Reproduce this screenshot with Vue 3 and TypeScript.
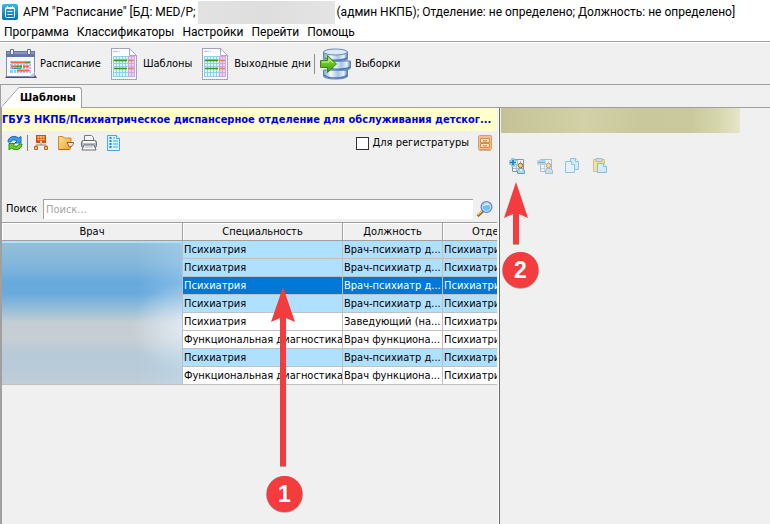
<script setup lang="ts">
import { ref } from 'vue'

interface Row {
  id: number
  speciality: string
  position: string
  department: string
  tone: 'blue' | 'plain'
}

const menu: string[] = ['Программа', 'Классификаторы', 'Настройки', 'Перейти', 'Помощь']
const sheets: string[] = ['Шаблоны', 'Выходные дни']
const child = 'Врач-психиатр д...'
const functional = 'Врач функциона...'
const department = 'Психиатри'

const rows: Row[] = [
  { id: 1, speciality: 'Психиатрия', position: child, department, tone: 'blue' },
  { id: 2, speciality: 'Психиатрия', position: child, department, tone: 'blue' },
  { id: 3, speciality: 'Психиатрия', position: child, department, tone: 'blue' },
  { id: 4, speciality: 'Психиатрия', position: child, department, tone: 'blue' },
  { id: 5, speciality: 'Психиатрия', position: 'Заведующий (на...', department, tone: 'plain' },
  { id: 6, speciality: 'Функциональная диагностика', position: functional, department, tone: 'plain' },
  { id: 7, speciality: 'Психиатрия', position: child, department, tone: 'blue' },
  { id: 8, speciality: 'Функциональная диагностика', position: functional, department, tone: 'plain' },
]

const selected = ref(3)
const query = ref('')
const registry = ref(false)
</script>

<template>
  <div class="window">
    <svg class="defs" aria-hidden="true">
      <defs>
        <linearGradient id="blueGrad" x1="0" y1="0" x2="0" y2="1">
          <stop offset="0" stop-color="#35b5e8" /><stop offset="1" stop-color="#0a6fae" />
        </linearGradient>
        <linearGradient id="discGrad">
          <stop offset="0" stop-color="#7f9fc4" /><stop offset=".3" stop-color="#f4faff" />
          <stop offset=".6" stop-color="#a9c6e4" /><stop offset=".85" stop-color="#e8f3fd" />
          <stop offset="1" stop-color="#5577a8" />
        </linearGradient>
        <linearGradient id="greenGrad" x1="0" y1="0" x2="0" y2="1">
          <stop offset="0" stop-color="#a5e63e" /><stop offset="1" stop-color="#2f9d08" />
        </linearGradient>
        <linearGradient id="goldGrad" x1="0" y1="0" x2="1" y2="1">
          <stop offset="0" stop-color="#ffe39a" /><stop offset="1" stop-color="#eda12c" />
        </linearGradient>
      </defs>
    </svg>

    <header class="title">
      <svg class="app-icon" width="16" height="16" viewBox="0 0 16 16" aria-hidden="true">
        <rect width="16" height="16" rx="2" fill="url(#blueGrad)" />
        <rect x="3.5" y="3.5" width="9" height="10" rx="1" fill="none" stroke="#fff" />
        <path d="M4 4.500h8M5.500 2v2M10.500 2v2" stroke="#fff" />
        <path d="M5.500 7.500h5M5.500 10.500h5" stroke="#fff" />
      </svg>
      <span>АРМ "Расписание" [БД: MED/P;</span>
      <span class="masked-name"></span>
      <span>(админ НКПБ); Отделение: не определено; Должность: не определено]</span>
    </header>

    <nav class="menu">
      <button v-for="item in menu" :key="item" type="button">{{ item }}</button>
    </nav>

    <div class="toolbar">
      <button type="button" class="tool">
        <svg width="32" height="32" viewBox="0 0 32 32" aria-hidden="true">
          <path d="M2 27h28l2 3H0z" fill="#4d5577" />
          <rect x="1.500" y="3.500" width="28" height="25" rx="1" fill="#f6f9fd" stroke="#7f8bb2" />
          <path d="M1 3h29v6H1z" fill="#6874a8" /><path d="M2 4h27v2H2z" fill="#8b96c3" />
          <path d="M24 28.500l6-5-1 5z" fill="#c4cee2" />
          <path d="M5.500 1.500v5h3v-5zM22.500 1.500v5h3v-5z" fill="#eef4f9" stroke="#597596" />
          <path d="M5 13h21v12H5z" fill="#94cdec" />
          <path d="M21 13h4v12h-4z" fill="#e1b3e7" />
          <path d="M5 15.500h21M5 18.500h21M5 21.500h21M8.500 13v12M11.500 13v12M14.500 13v12M17.500 13v12M20.500 13v12M23.500 13v12" stroke="#e5f8ff" />
          <path d="M6 14.500h14M12 22.500h12M6 18.500h5M18 18.500h6" stroke="#ff6239" stroke-width="2" />
          <path d="M20 14.500h5M11 18.500h6" stroke="#43a527" stroke-width="2" />
          <path d="M7 20.500h9" stroke="#299be2" stroke-width="1" />
        </svg>
        <span>Расписание</span>
      </button>
      <button v-for="item in sheets" :key="item" type="button" class="tool sheet">
        <svg width="26" height="32" viewBox="0 0 26 32" aria-hidden="true">
          <path d="M.5.500h18l7 7v24H.5z" fill="#fafcff" stroke="#475193" stroke-dasharray="1 1" />
          <path d="M18.500.500v7h7z" fill="#fff" stroke="#a3abc5" />
          <path d="M2 3.500h5M8 3.500h1" stroke="#b4c5ed" />
          <path d="M2 8h15v21H2z" fill="#d8f9ff" /><path d="M17 8h7v21h-7z" fill="#f6c9fa" />
          <path d="M2 8.500h15M2 11.500h15M2 15.500h15M2 18.500h15M2 24.500h15M2 28.500h15M2.500 8v21M5.500 8v21M8.500 8v21M11.500 8v21M14.500 8v21" stroke="#91cfec" />
          <path d="M17 8.500h7M17 15.500h7M17 18.500h7M17 24.500h7M17 28.500h7M17.500 8v21M20.500 8v21M23.500 8v21" stroke="#c9a8e4" />
          <path d="M3 12.500h13M3 20.500h13" stroke="#369c0b" stroke-width="1.500" />
          <path d="M17 12.500h6M17 20.500h6" stroke="#f0795d" stroke-width="1.500" />
        </svg>
        <span>{{ item }}</span>
      </button>
      <span class="divider"></span>
      <button type="button" class="tool">
        <svg width="32" height="32" viewBox="0 0 32 32" aria-hidden="true">
          <g fill="url(#discGrad)" stroke="#6184b3">
            <path d="M3.500 22v6c0 4 24 4 24 0v-6z" />
            <path d="M7.500 13v7c0 3 23 3 23 0v-7z" />
            <path d="M3.500 4v7c0 3 24 3 24 0V4z" />
          </g>
          <ellipse cx="15.500" cy="4" rx="12" ry="3" fill="#d9ebfa" stroke="#6988b2" />
          <path d="M5 10c4 3 17 3 22 0M8 19c4 3 17 3 22 0M4 27c5 4 19 4 23 0" fill="none" stroke="#4d79ba" stroke-width="1.500" />
          <path d="M.5 12.500h7v-5l9 8.500-9 8.500v-5h-7z" fill="url(#greenGrad)" stroke="#348b13" />
          <path d="M2 14h7v-3l4 4" fill="none" stroke="#d0f58b" />
        </svg>
        <span>Выборки</span>
      </button>
    </div>

    <div class="tab-strip">
      <svg class="tab-slant" width="18" height="21" viewBox="0 0 18 21" aria-hidden="true">
        <path d="M0 21V19L15 2Q16 0 18 0V21z" fill="#fff" />
        <path d="M0 19.500L15 2.500Q16 .5 18 .5" fill="none" stroke="#a0a0a0" />
      </svg>
      <button type="button" class="tab">Шаблоны</button>
    </div>

    <main class="workspace">
      <section class="left-pane">
        <h1 class="unit">ГБУЗ НКПБ/Психиатрическое диспансерное отделение для обслуживания детског...</h1>

        <div class="actions">
          <button type="button" aria-label="Обновить">
            <svg width="16" height="16" viewBox="0 0 16 16">
              <path d="M1 7C1 2 7-.5 11.500 3L14 1.500V8H8l2-2C7 4 5 5 4 7z" fill="#3e9de5" stroke="#176bb7" />
              <path d="M15 9c0 5-6 7.500-10.500 4L2 15V8.500h6l-2 2c3 1.500 5 .5 6-1.500z" fill="#6ccc2d" stroke="#328e18" />
            </svg>
          </button>
          <span class="short-divider"></span>
          <button type="button" aria-label="Структура">
            <svg width="16" height="16" viewBox="0 0 16 16">
              <path d="M3 0h10v8H3z" fill="#d64e0b" /><path d="M4.500 2h7M4.500 4.500h7" stroke="#ffe184" stroke-width="1.500" stroke-dasharray="2 .5" />
              <path d="M7 6h2v2H7z" fill="#fff0a7" />
              <path d="M8 8v2M3 13v-3h10v3" fill="none" stroke="#7f8793" />
              <path d="M1.500 11.500h3v3h-3zM11.500 11.500h3v3h-3z" fill="#ffc160" stroke="#bd660e" />
            </svg>
          </button>
          <button type="button" class="folder" aria-label="Открыть">
            <svg width="16" height="16" viewBox="0 0 16 16">
              <path d="M.5 14.500v-13H5l1 1.500h7v4l-1 7.500z" fill="url(#goldGrad)" stroke="#d48a20" />
              <path d="M9 7.500h6.500c0 3-2 4-4 4.500z" fill="#fff5e1" stroke="#8c5a40" />
              <path d="M1 14.500h10" stroke="#b96c14" />
            </svg>
          </button>
          <button type="button" class="printer" aria-label="Печать">
            <svg width="16" height="16" viewBox="0 0 16 16">
              <path d="M3.500 7V.5h7l2 2V7z" fill="#f5f7fa" stroke="#737982" />
              <rect x=".5" y="5.500" width="15" height="7" rx="2" fill="#b8bdc5" stroke="#646970" />
              <path d="M2 7h12" stroke="#f8f8f8" stroke-width="2" />
              <path d="M3 10h10l2 5H1z" fill="#fafafa" stroke="#666b72" /><path d="M4 12h8" stroke="#adb3ba" />
            </svg>
          </button>
          <button type="button" aria-label="Список">
            <svg width="13" height="16" viewBox="0 0 13 16">
              <path d="M.5.500h9l3 3v12H.500z" fill="#d9f3ff" stroke="#49a7df" />
              <path d="M9.500.500v3h3" fill="#fff" stroke="#49a7df" />
              <path d="M2.500 3h2M2.500 6h2M2.500 9h2M2.500 12h2" stroke="#2486cc" stroke-width="2" />
              <path d="M6 3h2M6 6h5M6 9h5M6 12h5" stroke="#49a7df" />
            </svg>
          </button>
          <label class="registry"><input v-model="registry" type="checkbox" />Для регистратуры</label>
          <button type="button" class="cabinet" aria-label="Регистратура">
            <svg width="14" height="16" viewBox="0 0 14 16">
              <rect x=".5" y=".5" width="13" height="14" rx="1" fill="#f4bd8b" stroke="#d99b6b" />
              <path d="M2.500 3.500h9v4h-9zM2.500 8.500h9v4h-9z" fill="#fbe0a8" stroke="#cf8d5e" />
              <path d="M5.500 5v1h3V5M5.500 10v1h3v-1" fill="none" stroke="#c48759" />
              <path d="M1 15.500h12" stroke="#dbaa86" />
            </svg>
          </button>
        </div>

        <div class="search">
          <label for="search">Поиск</label>
          <input id="search" v-model="query" type="text" placeholder="Поиск..." />
          <button type="button" aria-label="Найти">
            <svg width="17" height="16" viewBox="0 0 17 16">
              <path d="M7 10l-5.500 5" stroke="#93622e" stroke-width="3" /><path d="M6 10l-4.500 4" stroke="#ffc858" stroke-width="1.500" />
              <circle cx="10.500" cy="6" r="5.400" fill="#77c8f6" stroke="#667fc3" stroke-width="1.200" />
              <circle cx="10.500" cy="6" r="4.200" fill="#70bff3" stroke="#c5e6fb" />
              <path d="M8 5c1-2 3-2.500 5-1" fill="none" stroke="#dff3ff" stroke-width="1.500" />
            </svg>
          </button>
        </div>

        <div class="grid-wrap">
          <table>
            <colgroup><col class="c-doctor" /><col class="c-spec" /><col class="c-post" /><col class="c-dept" /></colgroup>
            <thead>
              <tr><th>Врач</th><th>Специальность</th><th>Должность</th><th>Отделение</th></tr>
            </thead>
            <tbody>
              <tr v-for="row in rows" :key="row.id" :class="[row.tone, { selected: row.id === selected }]" @click="selected = row.id">
                <td></td><td>{{ row.speciality }}</td><td>{{ row.position }}</td><td>{{ row.department }}</td>
              </tr>
            </tbody>
          </table>
          <div class="masked-doctors"></div>
        </div>
      </section>

      <section class="right-pane">
        <div class="masked-heading"></div>
        <div class="template-actions">
          <button type="button" aria-label="Добавить шаблон">
            <svg width="16" height="16" viewBox="0 0 16 16">
              <path d="M3.500 1.500h11v12h-11z" fill="#f3f6f8" stroke="#8299aa" />
              <path d="M4 6.500h10M4 10.500h7M7.500 3v10M11.500 3v6" stroke="#a9b9c6" />
              <path d="M2.500.5h3v2h3v4h-3v2h-3v-2h-2v-4h2z" fill="#fff" stroke="#8fc4e2" />
              <path d="M4 1.500v6M1 4.500h6" stroke="#178ccc" stroke-width="2" />
              <circle cx="11.500" cy="7.500" r="2.300" fill="#ffcb65" stroke="#a5672a" /><path d="M8.500 15.500v-3l2-2h3l2 2v3z" fill="#a8d7f4" stroke="#6b9dbd" /><path d="M11 11l1 3 1-3z" fill="#fff" />
            </svg>
          </button>
          <button type="button" class="faded" aria-label="Удалить шаблон">
            <svg width="16" height="16" viewBox="0 0 16 16">
              <path d="M3.500 1.500h11v12h-11z" fill="#f3f6f8" stroke="#8299aa" />
              <path d="M4 6.500h10M4 10.500h7M7.500 3v10M11.500 3v6" stroke="#a9b9c6" />
              <path d="M.5 2.500h8v4h-8z" fill="#fff" stroke="#8fc4e2" /><path d="M1 4.500h7" stroke="#178ccc" stroke-width="2" />
              <circle cx="11.500" cy="7.500" r="2.300" fill="#ffcb65" stroke="#a5672a" /><path d="M8.500 15.500v-3l2-2h3l2 2v3z" fill="#a8d7f4" stroke="#6b9dbd" />
            </svg>
          </button>
          <button type="button" class="faded" aria-label="Копировать">
            <svg width="16" height="16" viewBox="0 0 16 16">
              <path d="M5.500.500h5l3 3v8h-8z" fill="#bfe5fa" stroke="#4da7dc" />
              <path d="M.5 3.500h6l3 3v8h-9z" fill="#dcf2fe" stroke="#4da7dc" /><path d="M6.500 3.500v3h3M10.500.500v3h3" fill="#fff" stroke="#4da7dc" />
            </svg>
          </button>
          <button type="button" class="faded" aria-label="Вставить">
            <svg width="16" height="16" viewBox="0 0 16 16">
              <path d="M.5 1.500h11v12H.5z" fill="#ffd56a" stroke="#d19d35" /><path d="M3 .5h6v3H3z" fill="#add9ed" stroke="#65a0c5" />
              <path d="M4.500 5.500h6l3 3v6h-9z" fill="#c4e8fc" stroke="#369bd8" /><path d="M10.500 5.500v3h3" fill="#fff" stroke="#369bd8" />
            </svg>
          </button>
        </div>
      </section>
    </main>

    <svg class="callouts" width="770" height="524" viewBox="0 0 770 524">
      <g fill="#777" opacity=".6">
        <path d="M280 318h6v149h-6zM513 214h6v31h-6z" />
        <circle cx="284.500" cy="494.500" r="18.300" /><circle cx="520.500" cy="270.500" r="18.300" />
      </g>
      <g fill="#f43b3d">
        <path d="M283 287l12 35-9-4v148h-6V318l-9 4z" />
        <path d="M516 182l12 36-9-4v30h-6v-30l-9 4z" />
        <circle cx="284.500" cy="494" r="18" /><circle cx="520.500" cy="270" r="18" />
      </g>
      <g class="callout-text"><text x="284.500" y="502">1</text><text x="520.500" y="278">2</text></g>
    </svg>
  </div>
</template>

<style>
body { margin: 0; background: #f0f0f0; }
</style>

<style scoped>
.window {
  position: relative;
  display: flex;
  flex-direction: column;
  min-height: 100vh;
  overflow: hidden;
  background: #f0f0f0;
  color: #000;
  font: 11px/14px "DejaVu Sans Condensed", "DejaVu Sans", sans-serif;
}
button { padding: 0; border: 0; background: none; color: inherit; font: inherit; }
svg { display: block; flex: none; }
.defs { position: absolute; width: 0; height: 0; }

.title {
  display: flex;
  align-items: center;
  height: 24px;
  padding-left: 2px;
  background: #fff;
  font: 12px/16px Roboto, sans-serif;
  white-space: nowrap;
}
.app-icon { margin-right: 5px; }
.masked-name { width: 137px; height: 23px; margin: 0 2px; background: linear-gradient(90deg, #e2e2e2, #dedede 50%, #e4e4e4); }
.menu {
  display: flex;
  gap: 8px;
  height: 17px;
  padding-left: 4px;
  background: #fff;
  border-bottom: 1px solid #a0a0a0;
  font: 12px/17px Roboto, sans-serif;
}
.toolbar {
  display: flex;
  align-items: center;
  height: 41px;
  padding-left: 5px;
  border-top: 1px solid #fff;
  border-bottom: 1px solid #a0a0a0;
}
.tool { display: flex; align-items: center; gap: 3px; white-space: nowrap; }
.sheet { gap: 6px; margin-left: 10px; }
.divider { width: 1px; height: 20px; margin: 0 5px 0 3px; background: #8c8c8c; }

.tab-strip {
  display: flex;
  align-items: flex-end;
  height: 22px;
  padding-left: 1px;
  border-left: 1px solid #a0a0a0;
  border-bottom: 1px solid #a0a0a0;
}
.tab {
  height: 21px;
  padding-right: 5px;
  margin-bottom: -1px;
  background: #fff;
  border-top: 1px solid #a0a0a0;
  border-right: 1px solid #a0a0a0;
  border-top-right-radius: 3px;
  font-weight: bold;
}
.tab-slant { margin-bottom: -1px; }

.workspace {
  display: grid;
  grid-template-columns: minmax(0, 499fr) minmax(0, 271fr);
  flex: 1;
}
.left-pane { border-left: 2px solid #a0a0a0; border-right: 1px solid #fff; padding-right: 1px; }
.unit {
  margin: 0;
  overflow: hidden;
  background: #ffffcc;
  color: #0000f0;
  font-size: 11px;
  font-weight: bold;
  line-height: 23px;
  white-space: nowrap;
}
.actions { display: flex; align-items: center; height: 24px; padding: 0 5px; }
.short-divider { width: 1px; height: 16px; margin: 0 5px 0 4px; background: #808080; }
.folder { margin-left: 9px; }
.printer { margin: 0 10px 0 7px; }
.registry { display: flex; align-items: center; gap: 4px; margin-left: auto; }
.registry input { appearance: none; width: 13px; height: 13px; margin: 0; background: #fff; border: 1px solid #333; }
.cabinet { margin-left: 9px; }

.search { display: flex; align-items: center; height: 20px; margin-top: 44px; padding: 0 4px; }
.search label { width: 37px; }
.search input {
  flex: 1;
  min-width: 0;
  height: 20px;
  box-sizing: border-box;
  margin-right: 3px;
  padding: 0 2px;
  background: #fff;
  border: 0;
  border-top: 1px solid #a0a0a0;
  border-left: 1px solid #a0a0a0;
  outline: 0;
  color: inherit;
  font: inherit;
}
.search input::placeholder { color: #a5a5a5; opacity: 1; }

.grid-wrap { position: relative; margin-top: 3px; overflow: hidden; }
table { width: 558px; border-collapse: separate; border-spacing: 0; table-layout: fixed; border-top: 1px solid #a0a0a0; }
.c-doctor { width: 181px; }
.c-spec { width: 160px; }
.c-post { width: 100px; }
.c-dept { width: 117px; }
th, td { box-sizing: border-box; overflow: hidden; white-space: nowrap; }
th {
  height: 18px;
  padding: 0;
  border-right: 1px solid #a0a0a0;
  border-bottom: 1px solid #a0a0a0;
  box-shadow: inset 1px 1px #fff;
  font-weight: normal;
}
td { height: 18px; padding: 0 0 0 1px; border-right: 1px solid #c0c0c0; border-bottom: 1px solid #c0c0c0; }
.blue { background: #b0e0ff; }
.plain { background: #fff; }
.selected { background: #0078d7; color: #fff; }
.masked-doctors {
  position: absolute;
  top: 21px;
  left: 0;
  width: 180px;
  height: 141px;
  background:
    radial-gradient(ellipse 50px 45px at 100% 60%, rgb(255 255 255 / 50%), transparent),
    linear-gradient(90deg, transparent 75%, rgb(190 225 255 / 30%)),
    linear-gradient(#93bfd8, #82b7dc 15%, #68a9dc 28%, #6aabdc 36%, #91bcd8 46%, #c3cdd4 56%, #c7ced4 67%, #b6cad7 80%, #b9cbd8 90%, #c1ced7);
}

.right-pane { border-left: 1px solid #696969; }
.masked-heading {
  width: 239px;
  max-width: 100%;
  height: 25px;
  margin-left: 1px;
  background: linear-gradient(90deg, #c4c295, #d2d1a7 35%, #c9c89d 58%, #cac99e 80%, #d6d6ae 91%, #e7e6c8);
}
.template-actions { display: flex; gap: 12px; margin: 25px 0 0 9px; }
.faded { opacity: .6; }

.callouts { position: absolute; top: 0; left: 0; pointer-events: none; }
.callout-text { fill: #fff; font: bold 23px "Liberation Sans", sans-serif; text-anchor: middle; }
</style>
